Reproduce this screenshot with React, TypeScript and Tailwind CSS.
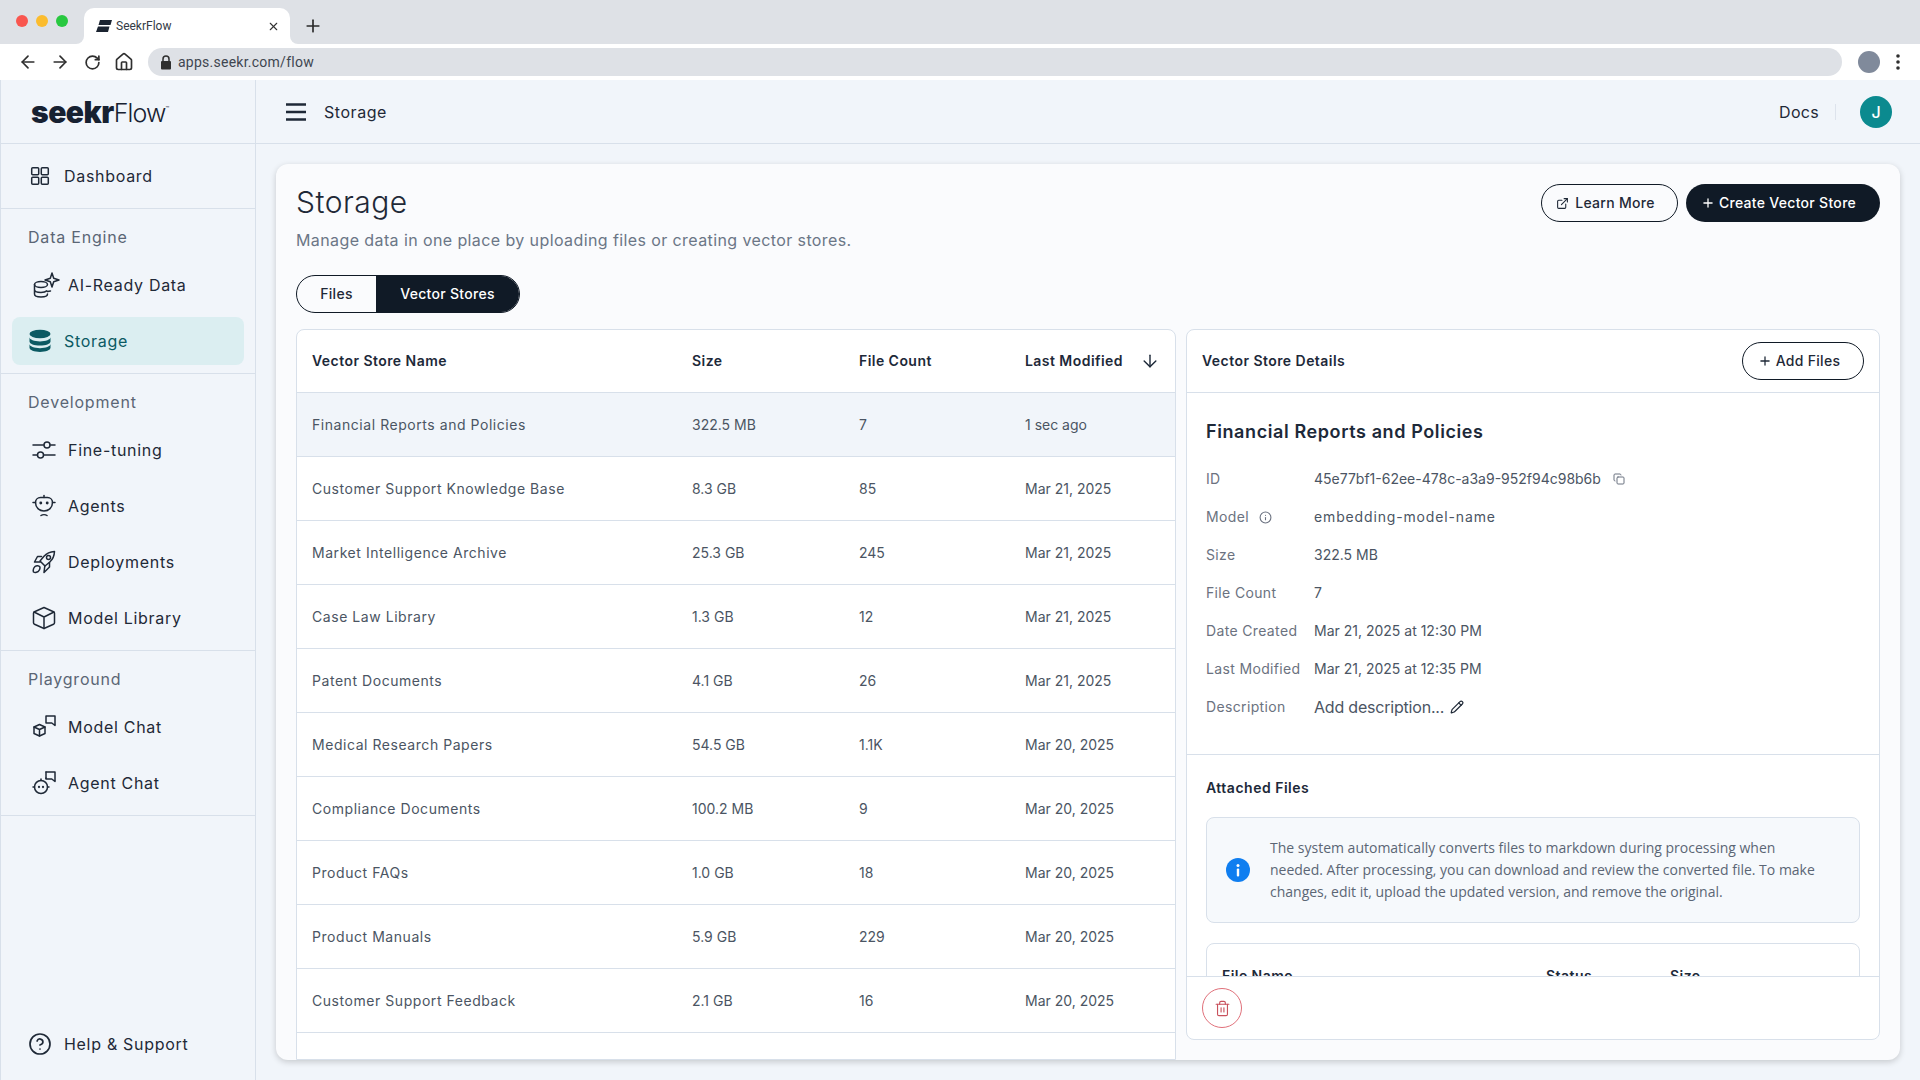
import React from "react";
import { ArrowLeft, ArrowRight, RotateCw, Home, Plus, X, ExternalLink, ArrowDown, Copy, Info, Pencil, Trash2, CircleHelp } from "lucide-react";

const S = { fill: "none", stroke: "currentColor", strokeWidth: 1.5, strokeLinecap: "round" as const, strokeLinejoin: "round" as const };

const DashIcon = () => (
  <svg width="24" height="24" viewBox="0 0 24 24" {...S}>
    <rect x="3.700" y="3.700" width="7" height="7" rx="1" /><rect x="13.300" y="3.700" width="7" height="7" rx="1" />
    <rect x="3.700" y="13.300" width="7" height="7" rx="1" /><rect x="13.300" y="13.300" width="7" height="7" rx="1" />
  </svg>
);
const AiDataIcon = () => (
  <svg width="28" height="28" viewBox="0 0 28 28" {...S} className="-my-1 -mr-1">
    <ellipse cx="9" cy="13.500" rx="6.500" ry="3" />
    <path d="M2.500 13.500v9.500c0 1.700 2.900 3 6.500 3s6.500-1.300 6.500-3M2.500 18.500c0 1.700 2.900 3 6.500 3 2.500 0 4.700-.6 5.800-1.600" />
    <path d="M15.500 20.500l3-.6" />
    <path d="M20 2l1.700 5.300L27 9l-5.300 1.700L20 16l-1.700-5.300L13 9l5.300-1.700z" />
  </svg>
);
const DbIcon = () => (
  <svg width="24" height="24" viewBox="0 0 24 24" fill="currentColor">
    <ellipse cx="12" cy="5" rx="10.500" ry="4.200" />
    <path d="M1.500 8.200c0 2.300 4.700 4.200 10.500 4.200s10.500-1.900 10.500-4.200v4.200c0 2.300-4.700 4.200-10.500 4.200S1.500 14.700 1.500 12.400z" />
    <path d="M1.500 15.500c0 2.300 4.700 4.200 10.500 4.200s10.500-1.900 10.500-4.200v3.700c0 2.300-4.700 4.200-10.500 4.200S1.500 21.500 1.500 19.200z" transform="translate(0 -.4)" />
  </svg>
);
const TuneIcon = () => (
  <svg width="24" height="24" viewBox="0 0 24 24" {...S}>
    <path d="M1 7h10.500M18.500 7H23M1 17h4M12 17h11" /><circle cx="15" cy="7" r="3" /><circle cx="8.500" cy="17" r="3" />
  </svg>
);
const AgentGlyph = () => (
  <>
    <path d="M12 1.500v2" />
    <path d="M3.500 8.500c0-2.800 2.200-5 5-5h7c2.800 0 5 2.200 5 5 0 5-3.800 8.500-8.500 8.500S3.500 13.500 3.500 8.500z" />
    <path d="M1 8.500h2.500M20.500 8.500H23M9 21.500c1.500-1 4.500-1 6 0" />
    <circle cx="8.800" cy="9" r=".7" fill="currentColor" /><circle cx="15.200" cy="9" r=".7" fill="currentColor" />
  </>
);
const AgentIcon = () => <svg width="24" height="24" viewBox="0 0 24 24" {...S}><AgentGlyph /></svg>;
const RocketIcon = () => (
  <svg width="24" height="24" viewBox="0 0 24 24" {...S}>
    <path d="M22.500 1.500c-4.500.3-8 2-10.500 4.800L8 11l5 5 4.800-4c2.800-2.500 4.500-6 4.700-10.500z" />
    <circle cx="16.500" cy="7.500" r="2" />
    <path d="M9.500 6.500H5.500L2.500 12h5.700M17.500 12.500v4.500l-5.500 5.500 .8-6.500" />
    <path d="M3 16.500c1.500-1.300 4-1 4.700.2.600 1.200-.2 3.500-1.700 5-1 .8-3.500 1-4.500.3-.5-1.500 0-4 1.500-5.500z" />
  </svg>
);
const CubeIcon = () => (
  <svg width="24" height="24" viewBox="0 0 24 24" {...S}>
    <path d="M12 1.500l9.500 4.200c.6.300 1 .8 1 1.500v9.600c0 .7-.4 1.200-1 1.500L12 22.500l-9.500-4.200c-.6-.3-1-.8-1-1.500V7.200c0-.7.4-1.200 1-1.500z" />
    <path d="M2 6l10 5 10-5M12 11v11.500" />
  </svg>
);
const ModelChatIcon = () => (
  <svg width="24" height="24" viewBox="0 0 24 24" {...S}>
    <path d="M7.500 9.500l5.500 2.500v6.500l-5.500 2.500-5.500-2.500V12z" /><path d="M2 12l5.500 2.500L13 12M7.500 14.500V21" />
    <path d="M14 1h9v9.500l-3.200-2.500H14z" />
  </svg>
);
const AgentChatIcon = () => (
  <svg width="24" height="24" viewBox="0 0 24 24" {...S}>
    <circle cx="9" cy="16" r="6.500" /><path d="M9 8v1.500M1 16h1.500M15.500 16H17" />
    <circle cx="7" cy="16" r=".4" fill="currentColor" /><circle cx="11" cy="16" r=".4" fill="currentColor" />
    <path d="M14 1h9v9.500l-3.200-2.500H14v-1" /><path d="M14 1v6.500" />
  </svg>
);

const Divider = "border-b border-[#d8e0ea]";

function NavItem({ icon, label, wide = true, active = false }: { icon: React.ReactNode; label: string; wide?: boolean; active?: boolean }) {
  return (
    <div className={`flex h-12 items-center gap-3 rounded-lg ${wide ? "pl-5" : "pl-4"} ${active ? "bg-[#dbeef1] text-[#0b5a63]" : "text-[#1f2937]"}`}>
      {icon}
      <span className="text-base tracking-[0.7px]">{label}</span>
    </div>
  );
}

function Section({ title, children }: { title: string; children: React.ReactNode }) {
  return (
    <div className={`${Divider} px-[11px] pb-2 pt-4`}>
      <div className="mb-3 pl-4 text-base leading-6 tracking-[0.8px] text-[#5b6675]">{title}</div>
      <div className="flex flex-col gap-2">{children}</div>
    </div>
  );
}

const rows = [
  ["Financial Reports and Policies", "322.5 MB", "7", "1 sec ago"],
  ["Customer Support Knowledge Base", "8.3 GB", "85", "Mar 21, 2025"],
  ["Market Intelligence Archive", "25.3 GB", "245", "Mar 21, 2025"],
  ["Case Law Library", "1.3 GB", "12", "Mar 21, 2025"],
  ["Patent Documents", "4.1 GB", "26", "Mar 21, 2025"],
  ["Medical Research Papers", "54.5 GB", "1.1K", "Mar 20, 2025"],
  ["Compliance Documents", "100.2 MB", "9", "Mar 20, 2025"],
  ["Product FAQs", "1.0 GB", "18", "Mar 20, 2025"],
  ["Product Manuals", "5.9 GB", "229", "Mar 20, 2025"],
  ["Customer Support Feedback", "2.1 GB", "16", "Mar 20, 2025"],
  ["Employee Handbook Archive", "3.4 GB", "41", "Mar 20, 2025"],
];

function DetailRow({ label, children }: { label: React.ReactNode; children: React.ReactNode }) {
  return (
    <div className="flex h-[38px] items-center text-sm">
      <div className="flex w-[108px] shrink-0 items-center tracking-[0.35px] text-[#6b7280]">{label}</div>
      <div className="flex items-center text-[#4b5563]">{children}</div>
    </div>
  );
}

export default function App() {
  return (
    <div className="flex h-[1080px] w-[1920px] flex-col overflow-hidden bg-[#f1f5fa] font-['Inter',sans-serif]">
      {/* browser tab strip */}
      <div className="flex h-11 shrink-0 items-end bg-[#dee1e6] font-['Roboto',sans-serif]">
        <div className="flex h-full w-[84px] items-center gap-2 pb-[3px] pl-4">
          <span className="h-3 w-3 rounded-full bg-[#f9564f]" />
          <span className="h-3 w-3 rounded-full bg-[#fbbc2e]" />
          <span className="h-3 w-3 rounded-full bg-[#28c840]" />
        </div>
        <div className="relative flex h-9 w-[206px] items-center rounded-t-[10px] bg-white pl-3 pr-[10px]">
          <svg width="16" height="12" viewBox="0 0 16 12" className="text-[#1a2330]" fill="currentColor">
            <path d="M4 0h12l-1.500 5H4.500L2.500 5z" /><path d="M2 6.500h11.500L12 12H0z" />
          </svg>
          <span className="ml-1 text-xs text-[#333a45]">SeekrFlow</span>
          <X size={13} className="ml-auto text-[#333]" />
          <div className="absolute -left-2 bottom-0 h-2 w-2 bg-white"><div className="h-full w-full rounded-br-lg bg-[#dee1e6]" /></div>
          <div className="absolute -right-2 bottom-0 h-2 w-2 bg-white"><div className="h-full w-full rounded-bl-lg bg-[#dee1e6]" /></div>
        </div>
        <Plus size={20} strokeWidth={2} className="mb-[8px] ml-[13px] text-[#2a2a2a]" />
      </div>
      {/* browser toolbar */}
      <div className="flex h-9 shrink-0 items-center bg-white pl-[18px] font-['Roboto',sans-serif] text-[#2f2f2f]">
        <ArrowLeft size={20} strokeWidth={2} />
        <ArrowRight size={20} strokeWidth={2} className="ml-3" />
        <RotateCw size={17} strokeWidth={2.400} className="ml-[14px]" />
        <Home size={20} strokeWidth={2} className="ml-[13px]" />
        <div className="ml-[14px] flex h-7 w-[1694px] items-center rounded-full bg-[#dee1e6] pl-3">
          <svg width="12" height="15" viewBox="0 0 12 15" fill="none">
            <path d="M3 6.500V4a3 3 0 0 1 6 0v2.500" stroke="currentColor" strokeWidth="1.500" />
            <rect x="1" y="6" width="10" height="8.500" rx="1" fill="currentColor" />
          </svg>
          <span className="ml-[6px] text-sm tracking-[0.25px] text-[#3f4650]">apps.seekr.com/flow</span>
        </div>
        <span className="ml-4 h-[22px] w-[22px] rounded-full bg-[#808a9b]" />
        <svg width="4" height="16" viewBox="0 0 4 16" fill="currentColor" className="ml-4"><circle cx="2" cy="2" r="1.800" /><circle cx="2" cy="8" r="1.800" /><circle cx="2" cy="14" r="1.800" /></svg>
      </div>

      <div className="flex min-h-0 flex-1">
        {/* sidebar */}
        <aside className="flex w-[256px] shrink-0 flex-col border-x border-[#d8e0ea] text-[#1f2937]">
          <div className={`${Divider} flex h-16 shrink-0 items-end pb-[15px] pl-[30px] text-[#172131]`}>
            <span className="text-[30px] font-black leading-[32px] tracking-[-0.5px]">seekr</span>
            <span className="text-[25px] font-light leading-[30px] tracking-[-0.9px]">Flow</span>
            <span className="mb-[15px] text-[6px] leading-[8px]">™</span>
          </div>
          <div className={`${Divider} h-[65px] shrink-0 px-[11px] pt-2`}>
            <NavItem icon={<DashIcon />} label="Dashboard" wide={false} />
          </div>
          <Section title="Data Engine">
            <NavItem icon={<AiDataIcon />} label="AI-Ready Data" />
            <NavItem icon={<DbIcon />} label="Storage" wide={false} active />
          </Section>
          <Section title="Development">
            <NavItem icon={<TuneIcon />} label="Fine-tuning" />
            <NavItem icon={<AgentIcon />} label="Agents" />
            <NavItem icon={<RocketIcon />} label="Deployments" />
            <NavItem icon={<CubeIcon />} label="Model Library" />
          </Section>
          <Section title="Playground">
            <NavItem icon={<ModelChatIcon />} label="Model Chat" />
            <NavItem icon={<AgentChatIcon />} label="Agent Chat" />
          </Section>
          <div className="mt-auto px-[11px] pb-3">
            <NavItem icon={<CircleHelp size={24} strokeWidth={1.700} />} label="Help & Support" wide={false} />
          </div>
        </aside>

        {/* main */}
        <main className="flex min-w-0 flex-1 flex-col">
          <header className={`${Divider} flex h-16 shrink-0 items-center pl-[30px] pr-7 text-[#1f2937]`}>
            <svg width="20" height="18" viewBox="0 0 20 18" fill="none" stroke="currentColor" strokeWidth="2.400"><path d="M0 1.500h20M0 9h20M0 16.500h20" /></svg>
            <span className="ml-[18px] text-base tracking-[0.55px]">Storage</span>
            <span className="ml-auto text-base tracking-[0.3px]">Docs</span>
            <span className="mx-4 h-4 w-px bg-[#dde3ec]" />
            <span className="ml-2 flex h-8 w-8 items-center justify-center rounded-full bg-[#0b8a8f] text-base font-medium text-white">J</span>
          </header>
          <div className="flex min-h-0 flex-1 p-5">
            <div className="flex min-h-0 flex-1 flex-col overflow-hidden rounded-xl bg-[#fafbfd] px-5 pb-5 pt-5 shadow-[0_2px_6px_rgba(0,0,0,0.18)]">
              <div className="flex items-start justify-between">
                <div>
                  <h1 className="text-[30px] font-light leading-[36px] tracking-[0.5px] text-[#1f2937]">Storage</h1>
                  <p className="mt-[8px] text-base leading-6 tracking-[0.4px] text-[#6b7686]">Manage data in one place by uploading files or creating vector stores.</p>
                </div>
                <div className="flex gap-2 text-sm font-medium tracking-[0.3px]">
                  <button className="flex h-[38px] w-[137px] items-center justify-center gap-[6px] rounded-full border border-[#101a26] pr-2 text-[#1f2937]">
                    <ExternalLink size={13} />Learn More
                  </button>
                  <button className="flex h-[38px] w-[194px] items-center justify-center gap-1 rounded-full bg-[#101a26] pr-[9px] text-white">
                    <Plus size={14} strokeWidth={2.200} />Create Vector Store
                  </button>
                </div>
              </div>
              <div className="mt-[23px] flex h-[38px] w-[224px] shrink-0 overflow-hidden rounded-full border border-[#101a26] text-sm font-medium tracking-[0.3px]">
                <div className="flex w-[79px] items-center justify-center text-[#1f2937]">Files</div>
                <div className="flex flex-1 items-center justify-center bg-[#101a26] text-white">Vector Stores</div>
              </div>

              <div className="mt-4 flex min-h-0 flex-1 gap-[10px]">
                {/* left table */}
                <div className="-mb-5 w-[880px] shrink-0 overflow-hidden rounded-t-lg border border-[#d8e0ea] bg-white">
                  <div className="grid h-[63px] grid-cols-[380px_167px_166px_1fr] items-center border-b border-[#d8e0ea] px-[15px] text-sm font-semibold tracking-[0.45px] text-[#1d2939]">
                    <div>Vector Store Name</div>
                    <div>Size</div>
                    <div>File Count</div>
                    <div className="flex items-center justify-between">Last Modified <ArrowDown size={20} strokeWidth={1.700} /></div>
                  </div>
                  {rows.map((r, i) => (
                    <div key={r[0]} className={`grid h-16 grid-cols-[380px_167px_166px_1fr] items-center border-b border-[#d8e0ea] px-[15px] text-sm text-[#4b5563] ${i === 0 ? "bg-[#f1f5fa]" : ""}`}>
                      <div className="tracking-[0.55px]">{r[0]}</div><div>{r[1]}</div><div>{r[2]}</div><div>{r[3]}</div>
                    </div>
                  ))}
                </div>

                {/* right panel */}
                <div className="flex min-h-0 flex-1 flex-col overflow-hidden rounded-lg border border-[#d8e0ea] bg-white">
                  <div className="flex h-[63px] shrink-0 items-center justify-between border-b border-[#d8e0ea] pl-[15px] pr-[15px]">
                    <span className="text-sm font-semibold tracking-[0.45px] text-[#1d2939]">Vector Store Details</span>
                    <button className="flex h-[38px] w-[122px] items-center justify-center gap-1 rounded-full border border-[#101a26] pr-[8px] text-sm font-medium tracking-[0.3px] text-[#1f2937]">
                      <Plus size={14} strokeWidth={2.200} />Add Files
                    </button>
                  </div>
                  <div className="min-h-0 flex-1 overflow-hidden">
                    <div className={`${Divider} px-[19px] pb-7 pt-[25px]`}>
                      <h2 className="text-lg font-semibold leading-7 tracking-[0.6px] text-[#1d2939]">Financial Reports and Policies</h2>
                      <div className="mt-[14px]">
                        <DetailRow label="ID">45e77bf1-62ee-478c-a3a9-952f94c98b6b<Copy size={12} className="ml-3 text-[#6b7280]" /></DetailRow>
                        <DetailRow label={<>Model<Info size={13} className="ml-[10px]" /></>}><span className="tracking-[0.85px]">embedding-model-name</span></DetailRow>
                        <DetailRow label="Size">322.5 MB</DetailRow>
                        <DetailRow label="File Count">7</DetailRow>
                        <DetailRow label="Date Created">Mar 21, 2025 at 12:30 PM</DetailRow>
                        <DetailRow label="Last Modified">Mar 21, 2025 at 12:35 PM</DetailRow>
                        <DetailRow label="Description"><span className="text-base tracking-[-0.2px]">Add description...</span><Pencil size={14} className="ml-[6px] text-[#1f2937]" /></DetailRow>
                      </div>
                    </div>
                    <div className="px-[19px] pt-[23px]">
                      <h3 className="text-sm font-semibold leading-5 tracking-[0.5px] text-[#1d2939]">Attached Files</h3>
                      <div className="mt-[19px] flex h-[106px] items-center gap-5 rounded-lg border border-[#d8e0ea] bg-[#f6f9fc] pl-[19px] pr-4">
                        <svg width="24" height="24" viewBox="0 0 24 24" className="shrink-0"><circle cx="12" cy="12" r="12" fill="#0f7ef0" /><circle cx="12" cy="7.500" r="1.500" fill="#fff" /><rect x="10.800" y="10.500" width="2.400" height="8" rx="1" fill="#fff" /></svg>
                        <p className="w-[555px] font-['Open_Sans',sans-serif] text-sm leading-[22px] text-[#5b6675]">The system automatically converts files to markdown during processing when needed. After processing, you can download and review the converted file. To make changes, edit it, upload the updated version, and remove the original.</p>
                      </div>
                      <div className="mt-5 rounded-lg border border-[#d8e0ea]">
                        <div className="grid h-[63px] grid-cols-[324px_124px_1fr] items-center px-[15px] text-sm font-semibold tracking-[0.45px] text-[#1d2939]">
                          <div>File Name</div><div>Status</div><div>Size</div>
                        </div>
                      </div>
                    </div>
                  </div>
                  <div className="flex h-[63px] shrink-0 items-start border-t border-[#d8e0ea] pl-[15px] pt-[11px]">
                    <button className="flex h-10 w-10 items-center justify-center rounded-full border border-[#e0707a] text-[#c9525d]">
                      <Trash2 size={17} strokeWidth={1.600} />
                    </button>
                  </div>
                </div>
              </div>
            </div>
          </div>
        </main>
      </div>
    </div>
  );
}
